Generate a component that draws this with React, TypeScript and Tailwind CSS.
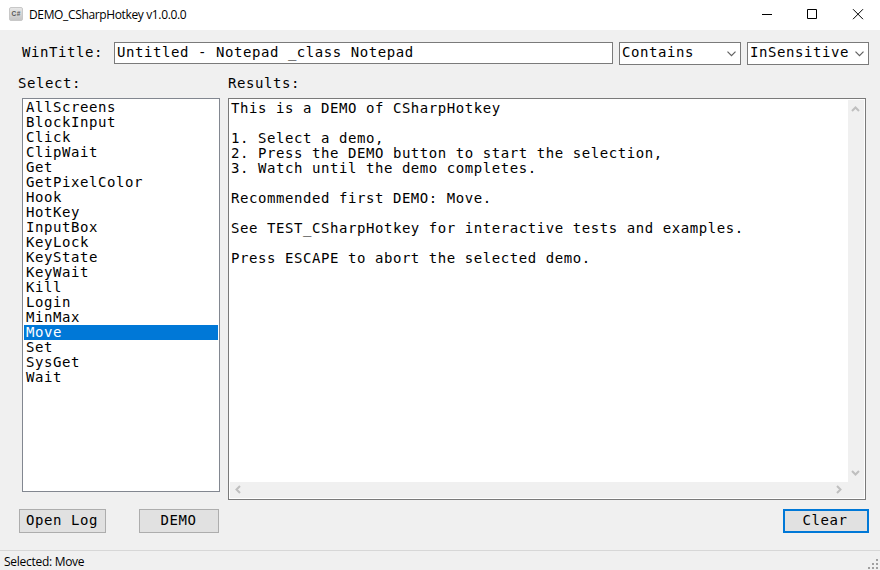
import type { ReactNode } from "react";

const MONO = "font-['DejaVu_Sans_Mono','Liberation_Mono',monospace] text-[14px] leading-[15px] tracking-[0.565px] whitespace-pre text-black";
const UI = "font-['Open_Sans','Noto_Sans',sans-serif] text-[12px] leading-[16px] text-black whitespace-pre";

const DEMOS = [
  "AllScreens", "BlockInput", "Click", "ClipWait", "Get", "GetPixelColor", "Hook", "HotKey", "InputBox",
  "KeyLock", "KeyState", "KeyWait", "Kill", "Login", "MinMax", "Move", "Set", "SysGet", "Wait",
];

const RESULTS = [
  "This is a DEMO of CSharpHotkey",
  "",
  "1. Select a demo,",
  "2. Press the DEMO button to start the selection,",
  "3. Watch until the demo completes.",
  "",
  "Recommended first DEMO: Move.",
  "",
  "See TEST_CSharpHotkey for interactive tests and examples.",
  "",
  "Press ESCAPE to abort the selected demo.",
].join("\n");

function Combo({ children }: { children: ReactNode }) {
  return (
    <div className="flex h-[23px] w-[122px] shrink-0 justify-between border border-[#7a7a7a] bg-white pt-[2px] pl-[2px]">
      <span>{children}</span>
      <svg width="9" height="6" viewBox="0 0 9 6" className="mt-[6px] mr-[4px] shrink-0" fill="none" stroke="#606060" strokeWidth="1.2">
        <path d="M0.5 0.7 4.5 4.7 8.5 0.7" />
      </svg>
    </div>
  );
}

function Arrow({ d }: { d: string }) {
  return (
    <svg width="9" height="9" viewBox="0 0 9 9" className="block" fill="none" stroke="#bfbfbf" strokeWidth="2">
      <path d={d} />
    </svg>
  );
}

function TitleBar() {
  return (
    <header className="flex h-[30px] w-full bg-white">
      <svg width="15" height="14" viewBox="0 0 15 14" className="mt-[7px] ml-[9px]">
        <defs>
          <linearGradient id="badge" x1="0" y1="0" x2="0" y2="1">
            <stop offset="0" stopColor="#e8e8e8" />
            <stop offset="1" stopColor="#c4c4c4" />
          </linearGradient>
        </defs>
        <rect x="0.5" y="0.5" width="13" height="13" rx="1.5" fill="url(#badge)" stroke="#c8c8c8" />
        <text x="2.6" y="9" fontSize="6.5" fontWeight="700" fontFamily="Liberation Sans, sans-serif" fill="#555">C#</text>
      </svg>
      <span className={`${UI} mt-[7px] ml-[5px] tracking-[-0.36px]`}>DEMO_CSharpHotkey v1.0.0.0</span>
      <svg width="120" height="30" viewBox="760 0 120 30" className="ml-auto" fill="none" stroke="black">
        <path d="M762 14.5h10M807.5 9.5h9v9h-9zM853 9.2l10 10M863 9.2l-10 10" />
      </svg>
    </header>
  );
}

export default function App() {
  return (
    <div className={`flex h-[570px] w-[880px] flex-col overflow-hidden bg-[#f0f0f0] ${MONO}`}>
      <TitleBar />
      <div className="flex h-[36px] pt-[12px] pl-[22px]">
        <label className="w-[92px] shrink-0 pt-[3px]">WinTitle:</label>
        <div className="h-[22px] w-[499px] shrink-0 border border-[#7a7a7a] bg-white pt-[2px] pl-[2px]">
          Untitled - Notepad _class Notepad
        </div>
        <div className="ml-[6px] flex gap-[6px]">
          <Combo>Contains</Combo>
          <Combo>InSensitive</Combo>
        </div>
      </div>
      <div className="flex h-[32px] pt-[10px] pl-[18px]">
        <span className="w-[210px]">Select:</span>
        <span>Results:</span>
      </div>
      <main className="flex h-[402px] items-start gap-[8px] pl-[22px]">
        <ul className="h-[394px] w-[198px] border border-[#828790] bg-white p-[1px]">
          {DEMOS.map((name) => (
            <li key={name} className={name === "Move" ? "h-[15px] bg-[#0078d7] pl-[2px] text-white" : "h-[15px] pl-[2px]"}>
              {name}
            </li>
          ))}
        </ul>
        <section className="flex h-[402px] w-[638px] flex-col border border-[#7a7a7a] bg-white p-[1px]">
          <div className="flex h-[382px]">
            <pre className={`grow pt-[1px] pl-[1px] ${MONO}`}>{RESULTS}</pre>
            <div className="flex w-[16px] flex-col items-start justify-between bg-[#f0f0f0] pt-[4px] pb-[5px] pl-[3px]">
              <Arrow d="M1 7 4.5 3.5 8 7" />
              <Arrow d="M1 3 4.5 6.5 8 3" />
            </div>
          </div>
          <div className="flex h-[16px] items-start justify-between bg-[#f0f0f0] pt-[3px] pr-[21px] pl-[4px]">
            <Arrow d="M6 1 2.5 4.5 6 8" />
            <Arrow d="M3 1 6.5 4.5 3 8" />
          </div>
        </section>
      </main>
      <div className="flex h-[50px] pt-[9px] pl-[19px]">
        <button className="block h-[24px] w-[87px] border border-[#adadad] bg-[#e1e1e1] pr-[1px] pb-[2px]">Open Log</button>
        <button className="ml-[33px] block h-[24px] w-[80px] border border-[#adadad] bg-[#e1e1e1] pr-[1px] pb-[2px]">DEMO</button>
        <button className="ml-[564px] block h-[24px] w-[86px] border-2 border-[#0078d7] bg-[#e1e1e1] pr-[2px] pb-[2px]">Clear</button>
      </div>
      <footer className="flex h-[20px] justify-between border-t border-[#d7d7d7]">
        <span className={`${UI} mt-[3px] ml-[4px] tracking-[-0.28px]`}>Selected: Move</span>
        <svg width="12" height="12" viewBox="0 0 12 12" className="mt-[7px]" fill="#a0a0a0">
          <path d="M8 1h2v2h-2zM4 5h2v2h-2zM8 5h2v2h-2zM0 9h2v2h-2zM4 9h2v2h-2zM8 9h2v2h-2z" />
        </svg>
      </footer>
    </div>
  );
}
